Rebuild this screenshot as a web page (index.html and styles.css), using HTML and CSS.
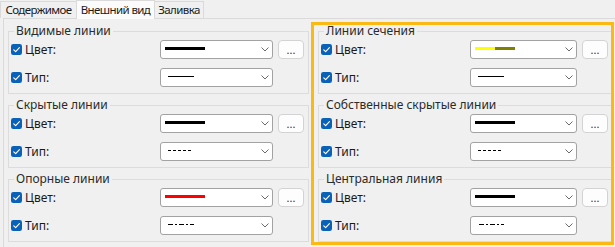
FILE: index.html
```html
<!DOCTYPE html>
<html lang="ru">
<head>
<meta charset="utf-8">
<title>Внешний вид</title>
<link rel="stylesheet" href="styles.css">
</head>
<body>
<div class="tabs">
  <div class="tab tab-content">Содержимое</div>
  <div class="tab tab-look active">Внешний вид</div>
  <div class="tab tab-fill">Заливка</div>
</div>
<div class="panel">
  <div class="col col-left">
    <fieldset class="group">
      <legend>Видимые линии</legend>
      <div class="rows">
        <label class="chk"><svg class="box" viewBox="0 0 12 12"><rect width="12" height="12" rx="2.5"/><path d="M3 6.3 5.1 8.4 9.2 3.9"/></svg>Цвет:</label>
        <div class="combo"><span class="swatch black"></span><svg class="chev" viewBox="0 0 8 5"><path d="M0.5 0.5 4 4 7.5 0.5"/></svg></div>
        <div class="more">...</div>
        <label class="chk"><svg class="box" viewBox="0 0 12 12"><rect width="12" height="12" rx="2.5"/><path d="M3 6.3 5.1 8.4 9.2 3.9"/></svg>Тип:</label>
        <div class="combo"><svg class="ltype" viewBox="0 0 28 3"><line x1="0" y1="1.5" x2="26" y2="1.5"/></svg><svg class="chev" viewBox="0 0 8 5"><path d="M0.5 0.5 4 4 7.5 0.5"/></svg></div>
      </div>
    </fieldset>
    <fieldset class="group">
      <legend>Скрытые линии</legend>
      <div class="rows">
        <label class="chk"><svg class="box" viewBox="0 0 12 12"><rect width="12" height="12" rx="2.5"/><path d="M3 6.3 5.1 8.4 9.2 3.9"/></svg>Цвет:</label>
        <div class="combo"><span class="swatch black"></span><svg class="chev" viewBox="0 0 8 5"><path d="M0.5 0.5 4 4 7.5 0.5"/></svg></div>
        <div class="more">...</div>
        <label class="chk"><svg class="box" viewBox="0 0 12 12"><rect width="12" height="12" rx="2.5"/><path d="M3 6.3 5.1 8.4 9.2 3.9"/></svg>Тип:</label>
        <div class="combo"><svg class="ltype dashed" viewBox="0 0 28 3"><line x1="0" y1="1.5" x2="25" y2="1.5"/></svg><svg class="chev" viewBox="0 0 8 5"><path d="M0.5 0.5 4 4 7.5 0.5"/></svg></div>
      </div>
    </fieldset>
    <fieldset class="group">
      <legend>Опорные линии</legend>
      <div class="rows">
        <label class="chk"><svg class="box" viewBox="0 0 12 12"><rect width="12" height="12" rx="2.5"/><path d="M3 6.3 5.1 8.4 9.2 3.9"/></svg>Цвет:</label>
        <div class="combo"><span class="swatch red"></span><svg class="chev" viewBox="0 0 8 5"><path d="M0.5 0.5 4 4 7.5 0.5"/></svg></div>
        <div class="more">...</div>
        <label class="chk"><svg class="box" viewBox="0 0 12 12"><rect width="12" height="12" rx="2.5"/><path d="M3 6.3 5.1 8.4 9.2 3.9"/></svg>Тип:</label>
        <div class="combo"><svg class="ltype dashdot" viewBox="0 0 28 3"><line x1="0" y1="1.5" x2="26" y2="1.5"/></svg><svg class="chev" viewBox="0 0 8 5"><path d="M0.5 0.5 4 4 7.5 0.5"/></svg></div>
      </div>
    </fieldset>
  </div>
  <div class="col col-right">
    <fieldset class="group">
      <legend>Линии сечения</legend>
      <div class="rows">
        <label class="chk"><svg class="box" viewBox="0 0 12 12"><rect width="12" height="12" rx="2.5"/><path d="M3 6.3 5.1 8.4 9.2 3.9"/></svg>Цвет:</label>
        <div class="combo"><span class="swatch yellow"></span><svg class="chev" viewBox="0 0 8 5"><path d="M0.5 0.5 4 4 7.5 0.5"/></svg></div>
        <div class="more">...</div>
        <label class="chk"><svg class="box" viewBox="0 0 12 12"><rect width="12" height="12" rx="2.5"/><path d="M3 6.3 5.1 8.4 9.2 3.9"/></svg>Тип:</label>
        <div class="combo"><svg class="ltype" viewBox="0 0 28 3"><line x1="0" y1="1.5" x2="26" y2="1.5"/></svg><svg class="chev" viewBox="0 0 8 5"><path d="M0.5 0.5 4 4 7.5 0.5"/></svg></div>
      </div>
    </fieldset>
    <fieldset class="group">
      <legend>Собственные скрытые линии</legend>
      <div class="rows">
        <label class="chk"><svg class="box" viewBox="0 0 12 12"><rect width="12" height="12" rx="2.5"/><path d="M3 6.3 5.1 8.4 9.2 3.9"/></svg>Цвет:</label>
        <div class="combo"><span class="swatch black"></span><svg class="chev" viewBox="0 0 8 5"><path d="M0.5 0.5 4 4 7.5 0.5"/></svg></div>
        <div class="more">...</div>
        <label class="chk"><svg class="box" viewBox="0 0 12 12"><rect width="12" height="12" rx="2.5"/><path d="M3 6.3 5.1 8.4 9.2 3.9"/></svg>Тип:</label>
        <div class="combo"><svg class="ltype dashed" viewBox="0 0 28 3"><line x1="0" y1="1.5" x2="25" y2="1.5"/></svg><svg class="chev" viewBox="0 0 8 5"><path d="M0.5 0.5 4 4 7.5 0.5"/></svg></div>
      </div>
    </fieldset>
    <fieldset class="group">
      <legend>Центральная линия</legend>
      <div class="rows">
        <label class="chk"><svg class="box" viewBox="0 0 12 12"><rect width="12" height="12" rx="2.5"/><path d="M3 6.3 5.1 8.4 9.2 3.9"/></svg>Цвет:</label>
        <div class="combo"><span class="swatch black"></span><svg class="chev" viewBox="0 0 8 5"><path d="M0.5 0.5 4 4 7.5 0.5"/></svg></div>
        <div class="more">...</div>
        <label class="chk"><svg class="box" viewBox="0 0 12 12"><rect width="12" height="12" rx="2.5"/><path d="M3 6.3 5.1 8.4 9.2 3.9"/></svg>Тип:</label>
        <div class="combo"><svg class="ltype center" viewBox="0 0 28 3"><line x1="1" y1="1.5" x2="26" y2="1.5"/></svg><svg class="chev" viewBox="0 0 8 5"><path d="M0.5 0.5 4 4 7.5 0.5"/></svg></div>
      </div>
    </fieldset>
  </div>
  <div class="highlight"></div>
</div>
</body>
</html>
```
FILE: styles.css
```css
html, body {
  margin: 0;
  padding: 0;
}
body {
  width: 615px;
  height: 247px;
  overflow: hidden;
  background: #f0f0f0;
  color: #1a1a1a;
  font-family: "Noto Sans", "Liberation Sans", sans-serif;
  font-size: 12px;
  line-height: 14px;
}

/* tabs */
.tabs {
  display: flex;
  align-items: flex-end;
  height: 18px;
}
.tab {
  box-sizing: border-box;
  height: 17px;
  border: 1px solid #dadada;
  border-bottom: none;
  margin-right: -1px;
  display: flex;
  align-items: center;
  justify-content: center;
  background: #f0f0f0;
  white-space: nowrap;
  font-size: 11.5px;
  letter-spacing: -0.6px;
}
.tab-content { width: 77px; }
.tab-look { width: 79px; }
.tab-fill { width: 50px; }
.tab.active {
  height: 19px;
  margin-bottom: -1px;
  background: #fbfbfb;
  position: relative;
  z-index: 1;
  align-items: flex-start;
  padding-top: 2px;
}

/* panel */
.panel {
  position: relative;
  margin-left: 3px;
  height: 229px;
  border-top: 1px solid #dadada;
  border-left: 1px solid #dadada;
  padding: 5px 0 0 4px;
  display: grid;
  grid-template-columns: 301px 295px;
  column-gap: 9px;
  align-content: start;
}
.col {
  display: flex;
  flex-direction: column;
  gap: 4px;
}

.group {
  margin: 0;
  padding: 2px 4px 6px 2px;
  border: 1px solid #dcdcdc;
  min-width: 0;
}
.group legend {
  padding: 0 2px;
  margin-left: 3px;
  line-height: 14px;
  color: #2b2b2b;
}
.rows {
  display: grid;
  grid-template-columns: 144px 1fr 26px;
  grid-template-rows: 19px 19px;
  column-gap: 5px;
  row-gap: 9px;
}

.chk {
  display: flex;
  align-items: center;
  gap: 3px;
  white-space: nowrap;
}
.box {
  width: 11px;
  height: 11px;
  flex: none;
}
.box rect { fill: #0a62b8; }
.box path {
  fill: none;
  stroke: #ffffff;
  stroke-width: 1.2;
  stroke-linecap: round;
  stroke-linejoin: round;
}

.combo {
  box-sizing: border-box;
  display: flex;
  align-items: center;
  justify-content: space-between;
  background: #ffffff;
  border: 1px solid #a2a2a2;
  border-radius: 3px;
  padding: 0 3px 0 4px;
}
.chev {
  width: 8px;
  height: 5px;
  flex: none;
}
.chev path {
  fill: none;
  stroke: #6a6a6a;
  stroke-width: 1;
}
.swatch {
  width: 40px;
  height: 3px;
  margin-top: -2px;
}
.swatch.black { background: #000000; }
.swatch.red { background: #ff0000; }
.swatch.yellow { background: linear-gradient(90deg, #ffff00 0 50%, #808000 50% 100%); }

.ltype {
  width: 28px;
  height: 3px;
  margin-left: 3px;
  margin-top: -2px;
}
.ltype line {
  stroke: #000000;
  stroke-width: 1;
}
.ltype.dashed line { stroke-dasharray: 3 2; }
.ltype.dashdot line { stroke-dasharray: 5 2 2 2; }
.ltype.center line { stroke-dasharray: 5 2 2 2; }

.more {
  box-sizing: border-box;
  display: flex;
  align-items: center;
  justify-content: center;
  background: #fdfdfd;
  border: 1px solid #d3d3d3;
  border-radius: 4px;
  font-size: 11px;
  color: #333333;
}

/* annotation overlay */
.highlight {
  position: absolute;
  left: 307px;
  top: 3px;
  width: 303px;
  height: 223px;
  box-sizing: border-box;
  border: 3px solid #fbb913;
  pointer-events: none;
}
```
